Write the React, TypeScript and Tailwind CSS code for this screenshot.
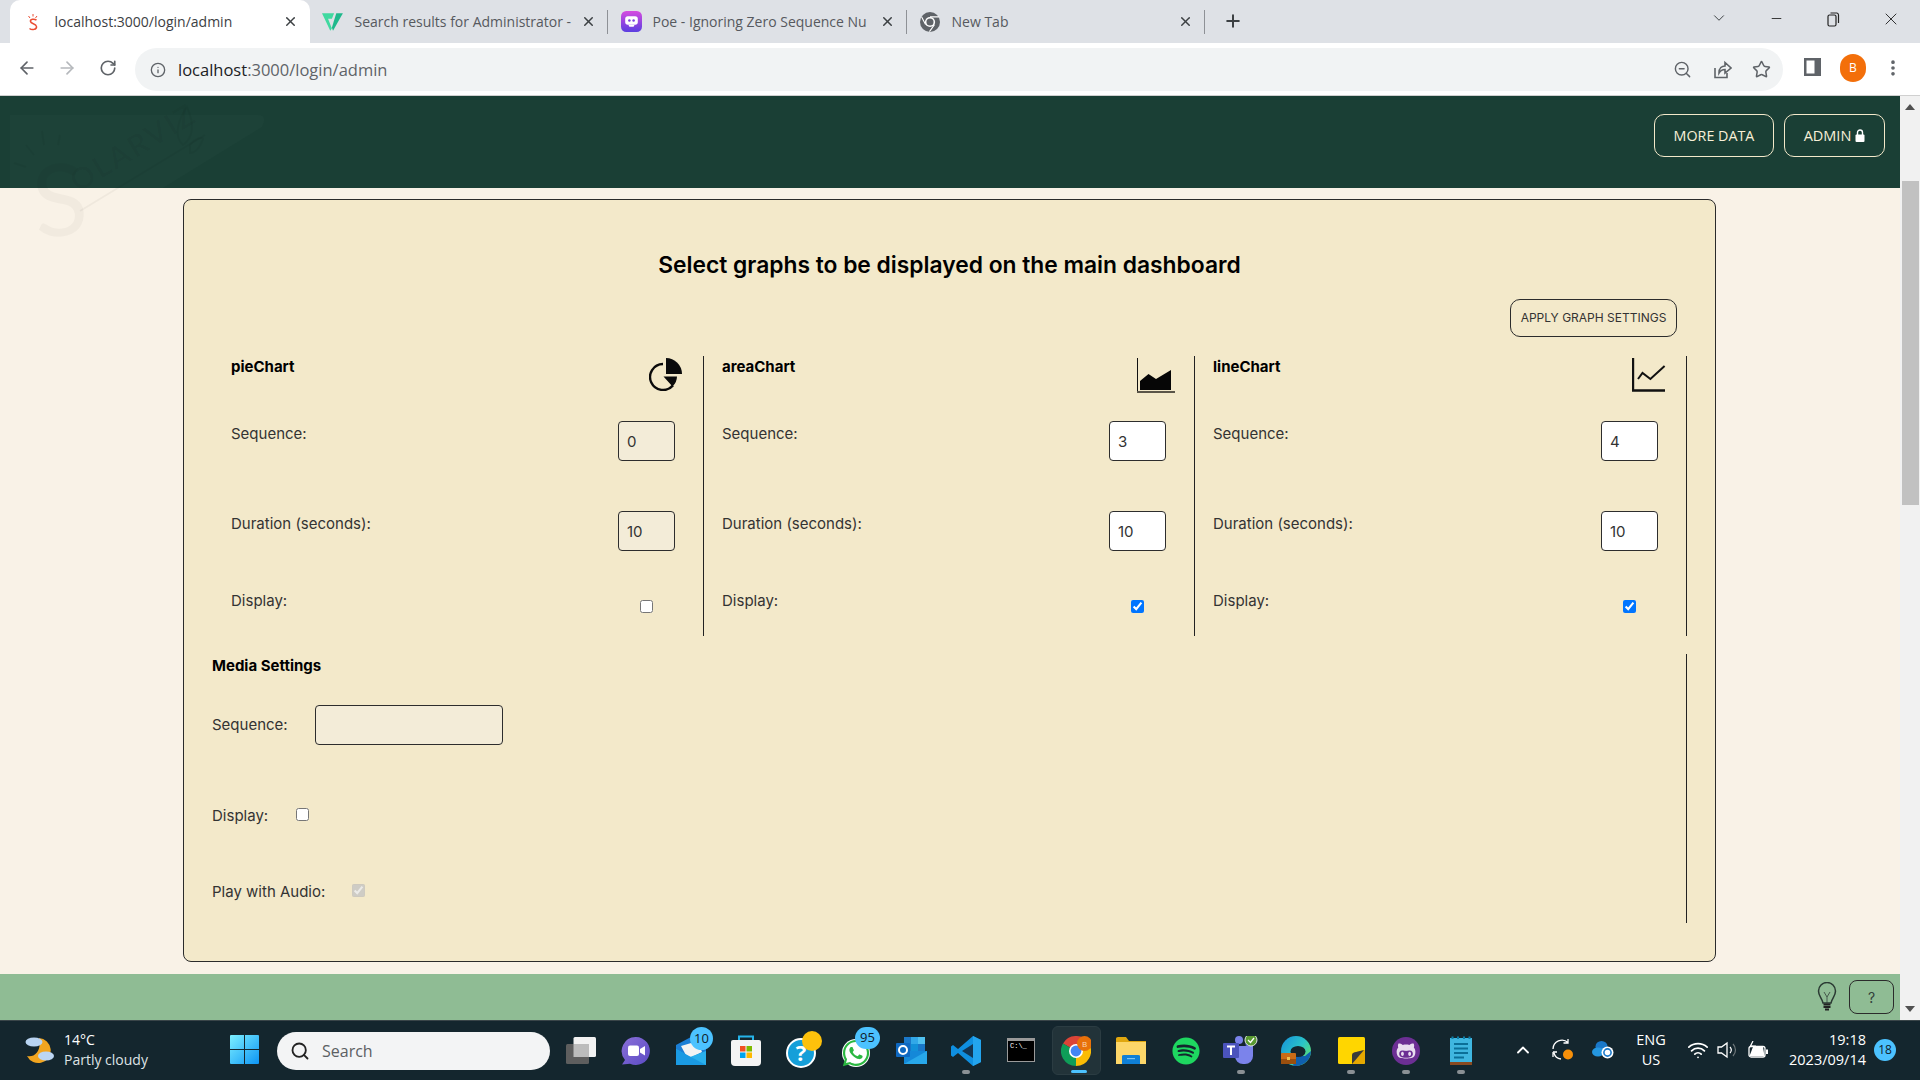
import React from "react";
import { ChevronUp, Search, Wifi, ArrowLeft, ArrowRight, RotateCw, Info, ZoomOut, Star, MoreVertical, X, Plus, Minus, ChevronDown } from "lucide-react";
import { FaWhatsapp, FaSpotify, FaGithubAlt } from "react-icons/fa";

const INTER = "font-['Inter',sans-serif]";

function PieIcon() {
  return (
    <svg width="33" height="33" viewBox="0 0 33 33">
      <path d="M14 6 A13 13 0 1 0 24 27.4" fill="none" stroke="#0b0b0b" strokeWidth="2.4" />
      <path d="M14.5 6 V18.5 H28 A14 14 0 0 1 23.5 28.5 L14.5 18.5 Z" fill="#0b0b0b" />
      <path d="M17 0 A16 16 0 0 1 33 16 L17 16 Z" fill="#0b0b0b" />
    </svg>
  );
}
function AreaIcon() {
  return (
    <svg width="38" height="35" viewBox="0 0 38 35">
      <path d="M0.5 0 V34" stroke="#111" strokeWidth="1" />
      <path d="M3 32 V23 L11.5 16 L19 21 L34 12 V32 Z" fill="#060606" />
      <path d="M0 34 H38" stroke="#5a5548" strokeWidth="2" />
    </svg>
  );
}
function LineIcon() {
  return (
    <svg width="34" height="34" viewBox="0 0 34 34">
      <path d="M1 0 V32.5 H33" fill="none" stroke="#111" strokeWidth="2.4" />
      <path d="M6 21 L10.5 15 L18.4 21 L32.6 8" fill="none" stroke="#111" strokeWidth="2" />
    </svg>
  );
}

function Field({ label, value, disabled }: { label: string; value: string; disabled: boolean }) {
  return (
    <div className="flex justify-between">
      <span className="text-[15px] leading-[24px] mt-px text-[#333]">{label}</span>
      <input
        defaultValue={value}
        disabled={disabled}
        className={`w-[57px] h-[40px] rounded-[4px] border border-[#2d2d2d] pl-[8px] text-[15px] text-[#333] ${disabled ? "bg-[#f3ecd8]" : "bg-white"}`}
      />
    </div>
  );
}

function ChartColumn({ name, icon, iconCls, seq, disabled, checked }: { name: string; icon: React.ReactNode; iconCls: string; seq: string; disabled: boolean; checked: boolean }) {
  return (
    <div className="h-[280px] border-r border-[#222] pl-[18px] pr-[28px]">
      <div className="h-[65px] flex justify-between">
        <span className="text-[15px] leading-[22px] font-bold text-black">{name}</span>
        <span className={`mt-[2px] ${iconCls}`}>{icon}</span>
      </div>
      <div className="h-[90px]"><Field label="Sequence:" value={seq} disabled={disabled} /></div>
      <div className="h-[78px]"><Field label="Duration (seconds):" value="10" disabled={disabled} /></div>
      <div className="flex justify-between">
        <span className="text-[15px] leading-[24px] text-[#333]">Display:</span>
        <span className="w-[57px] flex justify-center pt-[11px]">
          <input type="checkbox" defaultChecked={checked} className="w-[13px] h-[13px]" />
        </span>
      </div>
    </div>
  );
}

function Watermark() {
  return (
    <svg className="absolute left-0 top-[95px] pointer-events-none" width="300" height="190" viewBox="0 0 300 190">
      <path d="M10 20 H258 Q268 20 262 32 L25 178 L10 178 Z" fill="#ffffff" fillOpacity="0.015" />
      <g fill="#000" fillOpacity="0.03" fontFamily="Lato, sans-serif">
        <text x="33" y="142" fontSize="100" transform="rotate(-6 50 110)">S</text>
        <text x="78" y="98" fontSize="30" fontWeight="700" transform="rotate(-31 78 98)" letterSpacing="2">OLARVIZ</text>
      </g>
      <g fill="none" stroke="#000" strokeOpacity="0.04" strokeWidth="2">
        <path d="M80 116 L205 40" />
        <path d="M183 50 C172 40 180 22 187 12 C194 28 194 42 183 50 Z" />
        <path d="M190 50 C196 42 204 42 203 44 C200 52 196 58 190 58 Z" />
        <path d="M60 40 L58 50 M42 36 L44 50 M26 50 L34 60 M14 68 L26 72" />
      </g>
    </svg>
  );
}

function Tab({ width, icon, title, sep = true, active = false }: { width: number; icon: React.ReactNode; title: string; sep?: boolean; active?: boolean }) {
  return (
    <div className={`h-[43px] flex items-center relative shrink-0 ${active ? "bg-white rounded-t-[10px] text-[#3c4043]" : "text-[#56595e]"}`} style={{ width }}>
      <span className="ml-[15px] w-[16px] h-[16px] flex items-center justify-center shrink-0 [&>svg]:max-w-none [&>svg]:shrink-0">{icon}</span>
      <span className="ml-[13.5px] text-[14px] whitespace-nowrap">{title}</span>
      <X size={15} strokeWidth={2.4} className="absolute right-[12px] top-[14px] text-[#3c4043]" />
      {sep && <span className="absolute right-0 top-[10px] h-[24px] w-px bg-[#8e9196]" />}
    </div>
  );
}

function BrowserChrome() {
  return (
    <div className="font-['Open_Sans',sans-serif] shrink-0">
      <div className="h-[43px] bg-[#dee1e6] flex pl-[10px] relative">
        <Tab active width={300} title="localhost:3000/login/admin" sep={false} icon={
          <svg width="14" height="20" viewBox="0 0 14 20"><path d="M10.5 8 C8 6.5 4 7 4.5 9.5 C5 12 10 11.5 10.5 14.5 C11 17.5 6 18.5 3.5 16.5" fill="none" stroke="#ea4d33" strokeWidth="1.5" /><path d="M7 2 V4.5 M2.5 4 L4 6 M11 4 L9.5 6" stroke="#ea4d33" strokeWidth="1" /></svg>
        } />
        <Tab width={298} title="Search results for Administrator -" icon={
          <svg width="22" height="20" viewBox="0 0 20 18"><path d="M0 1 H11 L9 6 H5.5 L9 15 L7.5 17 Z" fill="#40d9a0" /><path d="M13 1 H19 L10 17 L9 14 Z" fill="#1fb98c" /></svg>
        } />
        <Tab width={299} title="Poe - Ignoring Zero Sequence Nu" icon={
          <svg width="21" height="21" viewBox="0 0 20 20"><defs><linearGradient id="poe" x1="0" y1="0" x2="0" y2="1"><stop offset="0" stopColor="#d64be0" /><stop offset="1" stopColor="#5b3fe0" /></linearGradient></defs><rect width="20" height="20" rx="5" fill="url(#poe)" /><rect x="4" y="5" width="12" height="8" rx="2.5" fill="#fff" /><circle cx="8" cy="9" r="1.2" fill="#7b3fe0" /><circle cx="12" cy="9" r="1.2" fill="#7b3fe0" /><path d="M7 13 H13 L12 15 H8 Z" fill="#fff" /></svg>
        } />
        <Tab width={298} title="New Tab" icon={
          <svg width="20" height="20" viewBox="0 0 18 18"><circle cx="9" cy="9" r="9" fill="#5f6368" /><circle cx="9" cy="9" r="4.6" fill="#fff" /><circle cx="9" cy="9" r="3.2" fill="#5f6368" /><path d="M9 4.4 H17 M5 11.3 L1.5 4.5 M13 11.3 L8.5 17.6" stroke="#fff" strokeWidth="1" /></svg>
        } />
        <Plus size={20} strokeWidth={2.4} className="text-[#3c4043] ml-[18px] mt-[11px]" />
        <ChevronDown size={18} strokeWidth={1.3} className="absolute left-[1710px] top-[9px] text-[#3c4043]" />
        <Minus size={15} strokeWidth={1.4} className="absolute left-[1769px] top-[11px] text-[#222]" />
        <svg className="absolute left-[1827px] top-[12px]" width="13" height="15" viewBox="0 0 13 15"><rect x="1" y="3" width="8" height="11" rx="1.5" fill="none" stroke="#222" strokeWidth="1.2" /><path d="M3.5 1 H10 A2 2 0 0 1 11.5 3 V11" fill="none" stroke="#222" strokeWidth="1.2" /></svg>
        <X size={20} strokeWidth={1.1} className="absolute left-[1881px] top-[9px] text-[#222]" />
      </div>
      <div className="h-[53px] bg-white flex items-start border-b border-[#d0d0d0] relative">
        <ArrowLeft size={20} strokeWidth={2} className="absolute left-[17px] top-[15px] text-[#5f6368]" />
        <ArrowRight size={20} strokeWidth={2} className="absolute left-[57px] top-[15px] text-[#b5b8bc]" />
        <RotateCw size={18} strokeWidth={2.2} className="absolute left-[99px] top-[16px] text-[#5f6368]" />
        <div className="ml-[135px] mt-[5px] w-[1648px] h-[43px] rounded-full bg-[#f1f3f4] flex items-center pl-[15px] relative">
          <Info size={16} strokeWidth={2} className="text-[#5f6368]" />
          <span className="ml-[12px] pt-px text-[16.5px] text-[#5f6368]"><span className="text-[#202124]">localhost</span>:3000/login/admin</span>
          <ZoomOut size={19} strokeWidth={1.8} className="absolute left-[1538px] top-[12px] text-[#5f6368]" />
          <svg className="absolute left-[1578px] top-[12px]" width="19" height="19" viewBox="0 0 19 19"><path d="M2 8 V17.5 H14 V13" fill="none" stroke="#5f6368" strokeWidth="1.6" /><path d="M6 13 C6 8 9 6 12 6 V2.5 L18 8 L12 13 V9.5 C9.5 9.5 7.5 10.5 6 13 Z" fill="none" stroke="#5f6368" strokeWidth="1.6" /></svg>
          <Star size={19} strokeWidth={1.9} className="absolute left-[1617px] top-[12px] text-[#5f6368]" />
        </div>
        <svg className="absolute left-[1804px] top-[15px]" width="17" height="18" viewBox="0 0 17 18"><rect x="0" y="0" width="17" height="18" fill="#5f6368" /><rect x="2.5" y="2.5" width="8" height="13" fill="#fff" /></svg>
        <span className="absolute left-[1840px] top-[11px] w-[26px] h-[28px] rounded-full bg-[#f36f0a] text-white text-[12px] flex items-center justify-center">B</span>
        <MoreVertical size={20} strokeWidth={2.4} className="absolute left-[1883px] top-[15px] text-[#5f6368]" />
      </div>
    </div>
  );
}

function Badge({ n, cls }: { n: string; cls: string }) {
  return <span className={`absolute rounded-full bg-[#4cc2ff] text-[#10202a] text-[13px] leading-none flex items-center justify-center ${cls}`}>{n}</span>;
}

function TaskItem({ children, dot, cls = "" }: { children: React.ReactNode; dot?: boolean; cls?: string }) {
  return (
    <div className={`w-[55px] h-[59px] shrink-0 relative flex items-center justify-center ${cls}`}>
      {children}
      {dot && <span className="absolute left-[23.5px] bottom-[6px] w-[8px] h-[4px] rounded-full bg-[#8a9094]" />}
    </div>
  );
}

function ChromeIcon() {
  return (
    <svg width="30" height="30" viewBox="0 0 30 30">
      <path d="M15 15 L2 7.5 A15 15 0 0 1 28 7.5 Z" fill="#db4437" />
      <path d="M15 15 L2 7.5 A15 15 0 0 0 15 30 Z" fill="#0f9d58" />
      <path d="M15 15 L28 7.5 A15 15 0 0 1 15 30 Z" fill="#fbbc05" />
      <circle cx="15" cy="15" r="7" fill="#fff" />
      <circle cx="15" cy="15" r="5.4" fill="#4285f4" />
      <circle cx="23.5" cy="7.5" r="7.5" fill="#e8710a" />
      <text x="23.5" y="10.5" fontSize="8" fill="#fbd9b8" textAnchor="middle" fontFamily="Open Sans">B</text>
    </svg>
  );
}

function Taskbar() {
  return (
    <div className="h-[60px] shrink-0 bg-[#14262e] border-t border-[#3a4549] flex items-center text-white font-['Open_Sans',sans-serif]">
      <div className="w-[218px] shrink-0 flex items-center pl-[25px] pb-[2px]">
        <svg width="29" height="28" viewBox="0 0 29 28">
          <path d="M14 2 A12.5 12.5 0 1 1 2 20 C10 22 17 14 14 2 Z" fill="#f2a51f" />
          <ellipse cx="9" cy="6" rx="8.5" ry="4.5" fill="#b9d4f2" />
          <ellipse cx="21" cy="20" rx="8" ry="4.5" fill="#bcd6f4" />
        </svg>
        <div className="ml-[10px] text-[14px] leading-[20px]">
          <div>14°C</div>
          <div className="text-[#dfe3e5]">Partly cloudy</div>
        </div>
      </div>
      <div className="w-[59px] shrink-0 flex pl-[12px] pb-[2px]">
        <svg width="29" height="29" viewBox="0 0 29 29">
          <defs><linearGradient id="win" x1="0" y1="0" x2="1" y2="1"><stop offset="0" stopColor="#7df0ff" /><stop offset="1" stopColor="#0d95f5" /></linearGradient></defs>
          <path d="M1 0 H14 V14 H0 V1 Q0 0 1 0 Z M15 0 H28 Q29 0 29 1 V14 H15 Z M0 15 H14 V29 H1 Q0 29 0 28 Z M15 15 H29 V28 Q29 29 28 29 H15 Z" fill="url(#win)" />
        </svg>
      </div>
      <div className="w-[273px] h-[38px] shrink-0 rounded-full bg-[#f3f4f5] flex items-center pl-[13px] text-[#5c6063]">
        <Search size={20} strokeWidth={2.2} className="text-[#222]" />
        <span className="ml-[12px] text-[16px]">Search</span>
      </div>
      <div className="w-[3.5px] shrink-0" />
      <TaskItem>
        <svg width="30" height="28" viewBox="0 0 30 28"><rect x="7.5" y="0" width="22.5" height="20" rx="1.5" fill="#f2f2f2" /><rect x="0" y="7" width="23" height="20" rx="1.5" fill="#5e5e5e" /><rect x="7.5" y="7" width="15.5" height="13" fill="#bcbcbc" /></svg>
      </TaskItem>
      <TaskItem>
        <svg width="30" height="30" viewBox="0 0 30 30"><defs><linearGradient id="meet" x1="0" y1="0" x2="1" y2="1"><stop offset="0" stopColor="#8a6fd8" /><stop offset="1" stopColor="#5b4bc4" /></linearGradient></defs><path d="M15 1 A14 14 0 1 1 9 27.7 L1 28.5 L4 24 A14 14 0 0 1 15 1 Z" fill="url(#meet)" /><rect x="7" y="9.5" width="11" height="10.5" rx="2" fill="#fff" /><path d="M19 13 L24 10 V19.5 L19 16.5 Z" fill="#fff" /></svg>
      </TaskItem>
      <TaskItem>
        <div className="relative w-[30px] h-[30px] mt-[3px]">
          <svg width="30" height="28" viewBox="0 0 30 28"><path d="M0 8 L15 0 L30 10 V27 H0 Z" fill="#1b7fd6" /><path d="M5 9 L22 4 L26 15 L12 22 Z" fill="#f3f3f3" /><path d="M0 12 L14 20 L30 14 V28 H0 Z" fill="#2ab0ec" /><path d="M0 12 L30 28 H0 Z" fill="#1a9ae3" /></svg>
          <Badge n="10" cls="left-[14px] -top-[10px] w-[23px] h-[23px]" />
        </div>
      </TaskItem>
      <TaskItem>
        <svg width="30" height="32" viewBox="0 0 30 32"><path d="M8 6 V1.5 H22 V6" fill="none" stroke="#25b4ea" strokeWidth="2" /><path d="M0 7 Q0 5 2 5 H28 Q30 5 30 7 V27 Q30 31 26 31 H4 Q0 31 0 27 Z" fill="#f4f4f4" /><rect x="9" y="11" width="5.5" height="5.5" fill="#f25022" /><rect x="15.5" y="11" width="5.5" height="5.5" fill="#7fba00" /><rect x="9" y="17.5" width="5.5" height="5.5" fill="#00a4ef" /><rect x="15.5" y="17.5" width="5.5" height="5.5" fill="#ffb900" /></svg>
      </TaskItem>
      <TaskItem>
        <div className="relative w-[30px] h-[30px] mt-[4px]">
          <svg width="30" height="30" viewBox="0 0 30 30"><circle cx="15" cy="15" r="14" fill="#159fd9" stroke="#fff" strokeWidth="2" /><text x="15" y="23" fontSize="22" fontWeight="700" fill="#fff" textAnchor="middle" fontFamily="Open Sans">?</text></svg>
          <span className="absolute left-[16px] -top-[7px] w-[20px] h-[20px] rounded-full bg-[#fdc10c]" />
        </div>
      </TaskItem>
      <TaskItem>
        <div className="relative w-[30px] h-[30px] mt-[4px]">
          <svg className="absolute left-0 top-0" width="30" height="30" viewBox="0 0 30 30"><circle cx="15" cy="15" r="14" fill="#fff" /></svg>
          <FaWhatsapp size={30} className="absolute left-0 top-0 text-[#2bb741]" />
          <Badge n="95" cls="left-[14px] -top-[11px] w-[25px] h-[22px]" />
        </div>
      </TaskItem>
      <TaskItem>
        <svg width="31" height="27" viewBox="0 0 31 27"><rect x="8" y="0" width="21" height="14" fill="#1a78c9" /><rect x="15" y="0" width="7" height="7" fill="#32a8e8" /><rect x="22" y="0" width="7" height="7" fill="#50c2f0" /><rect x="15" y="7" width="7" height="7" fill="#1290d8" /><path d="M8 14 H31 V27 H8 Z" fill="#1488d8" /><path d="M8 27 L31 14 V27 Z" fill="#28a8ea" /><rect x="0" y="6" width="14" height="14" rx="1" fill="#0f68c0" /><circle cx="7" cy="13" r="4" fill="none" stroke="#fff" strokeWidth="2" /></svg>
      </TaskItem>
      <TaskItem dot>
        <svg width="30" height="30" viewBox="0 0 30 30"><path d="M22 0 L30 4 V26 L22 30 L7 17 L2 21 L0 19.5 V10.5 L2 9 L7 13 Z" fill="#0f8fe0" /><path d="M22 8 L11 15 L22 22 Z" fill="#14263a" fillOpacity="0.85" /><path d="M22 0 L30 4 V26 L22 30 Z" fill="#23a4ee" /></svg>
      </TaskItem>
      <TaskItem>
        <div className="w-[28px] h-[24px] mb-[2px] bg-black border border-[#9a9a9a] border-t-[3px] font-['Liberation_Mono',monospace] text-[7px] leading-[10px] text-white pl-[2px]">C:\_</div>
      </TaskItem>
      <TaskItem>
        <div className="w-[49px] h-[49px] rounded-[6px] bg-[#223339] border border-[#2b3c42] flex items-center justify-center relative">
          <ChromeIcon />
          <span className="absolute left-[18px] bottom-[1px] w-[16px] h-[3px] rounded-full bg-[#4cc2ff]" />
        </div>
      </TaskItem>
      <TaskItem>
        <svg width="30" height="27" viewBox="0 0 30 27"><path d="M0 1.5 Q0 0 2 0 H10 L13 4 H30 V27 H0 Z" fill="#e0a70f" /><rect x="0" y="5" width="30" height="22" fill="#fcd669" /><path d="M6 19 Q6 18 8 18 H22 Q24 18 24 19 V27 H6 Z" fill="#0f7fd6" /><rect x="11" y="21" width="8" height="1.2" fill="#7ec4f0" /></svg>
      </TaskItem>
      <TaskItem>
        <FaSpotify size={28} className="text-[#1ed760]" />
      </TaskItem>
      <TaskItem dot>
        <svg width="36" height="30" viewBox="0 0 36 30"><circle cx="16" cy="4" r="4" fill="#7b83eb" /><circle cx="26" cy="8" r="3.5" fill="#5059c9" /><path d="M12 10 H30 V20 A8 8 0 0 1 22 28 H20 A8 8 0 0 1 12 20 Z" fill="#7b83eb" /><rect x="0" y="7" width="16" height="15" rx="1" fill="#4b53bc" /><path d="M4 10.5 H12 M8 10.5 V19" stroke="#fff" strokeWidth="2" /><circle cx="28" cy="4" r="6" fill="#5a9a32" stroke="#e0e6e0" strokeWidth="1" /><path d="M25 4 L27.5 6.5 L31 2" fill="none" stroke="#fff" strokeWidth="1.3" /></svg>
      </TaskItem>
      <TaskItem>
        <svg width="30" height="30" viewBox="0 0 30 30"><defs><linearGradient id="edge" x1="0" y1="0" x2="1" y2="0.7"><stop offset="0" stopColor="#1590dc" /><stop offset="0.6" stopColor="#2ac4c8" /><stop offset="1" stopColor="#5fe06e" /></linearGradient></defs><circle cx="15" cy="15" r="15" fill="url(#edge)" /><path d="M30 15 A15 15 0 0 1 12 29.7 L14 20 L24 20 Z" fill="#0f5fae" /><ellipse cx="17" cy="15.5" rx="7.5" ry="5.5" fill="#14262e" /><rect x="0" y="17" width="15" height="11" rx="1" fill="#c96b16" /><rect x="0" y="23" width="15" height="5" fill="#9a4f0e" /><rect x="6" y="21" width="3" height="3" fill="#f2c14e" /></svg>
      </TaskItem>
      <TaskItem dot>
        <svg width="27" height="27" viewBox="0 0 27 27"><rect width="27" height="27" rx="1.5" fill="#ffd600" /><path d="M14 27 V18 Q14 16 16 15.5 L27 13 V25 Q27 27 25 27 Z" fill="#e6a800" /><path d="M14 27 V18 Q14 16 16 15.5 L26 13 L14 27 Z" fill="#3a3a3a" /></svg>
      </TaskItem>
      <TaskItem dot>
        <div className="w-[28px] h-[28px] rounded-full bg-[#6c2f94] flex items-center justify-center">
          <FaGithubAlt size={20} className="text-[#e9def0]" />
        </div>
      </TaskItem>
      <TaskItem dot>
        <svg width="22" height="29" viewBox="0 0 22 29"><rect x="0" y="2" width="22" height="24" fill="#3fb6e0" /><rect x="0" y="26" width="22" height="3" fill="#8a4a20" /><path d="M2.5 0.5 V3 M8 0.5 V3 M14 0.5 V3 M19.5 0.5 V3" stroke="#0f7fa8" strokeWidth="2" /><path d="M4 8 H18 M4 12.5 H18 M4 17 H18 M4 21.5 H14" stroke="#0b6f98" strokeWidth="2" /></svg>
      </TaskItem>
      <div className="w-[14.5px] shrink-0" />
      <div className="w-[40px] flex justify-center shrink-0 mb-[2px]"><ChevronUp size={20} strokeWidth={2.2} /></div>
      <div className="w-[40px] flex justify-center shrink-0 mb-[2px]">
        <svg width="22" height="22" viewBox="0 0 22 22"><path d="M1 10 A9 9 0 0 1 16 3.5 M16 0 V4 H11.5" fill="none" stroke="#fff" strokeWidth="1.3" /><path d="M1 18 V13 M1 13 H5 M2 14 A8 8 0 0 0 9 20" fill="none" stroke="#fff" strokeWidth="1.3" /><circle cx="16" cy="15.5" r="5" fill="#f7900a" /></svg>
      </div>
      <div className="w-[40px] flex justify-center shrink-0 mb-[2px]">
        <svg width="22" height="18" viewBox="0 0 22 18"><ellipse cx="9.5" cy="5.5" rx="6" ry="5.5" fill="#1a78c9" /><ellipse cx="6" cy="11" rx="6" ry="4.5" fill="#2496e0" /><circle cx="15.5" cy="11.5" r="6" fill="#fff" /><circle cx="15.5" cy="11.5" r="3.6" fill="none" stroke="#1a78c9" strokeWidth="1.6" /></svg>
      </div>
      <div className="w-[56px] shrink-0 text-center text-[14.5px] leading-[20px] mb-[2px]"><div>ENG</div><div>US</div></div>
      <div className="w-[5px] shrink-0" />
      <div className="w-[28px] flex justify-center shrink-0 mb-[2px]"><Wifi size={22} strokeWidth={1.9} /></div>
      <div className="w-[30px] flex justify-center shrink-0 mb-[2px]">
        <svg width="21" height="18" viewBox="0 0 21 18"><path d="M1 6 H4.5 L10 2 V16 L4.5 12 H1 Z" fill="none" stroke="#fff" strokeWidth="1.3" /><path d="M13 6 A4.5 4.5 0 0 1 13 12" fill="none" stroke="#fff" strokeWidth="1.2" /><path d="M16 3 A8.5 8.5 0 0 1 16 15" fill="none" stroke="#6d7679" strokeWidth="1.2" /></svg>
      </div>
      <div className="w-[32px] flex justify-center shrink-0 mb-[2px]">
        <svg width="21" height="18" viewBox="0 0 21 18"><rect x="1" y="5.5" width="16" height="10.5" rx="2" fill="none" stroke="#fff" strokeWidth="1.3" /><path d="M1.5 15 L5 6 H15 L16.5 15 Z" fill="#fff" /><path d="M19 8.5 V13" stroke="#fff" strokeWidth="2" /><path d="M5 0 L2.5 5 H7 L4.5 9" fill="none" stroke="#fff" strokeWidth="1.2" /></svg>
      </div>
      <div className="w-[92px] shrink-0 text-right text-[14.5px] leading-[20px] mb-[2px]"><div>19:18</div><div>2023/09/14</div></div>
      <span className="ml-[8px] w-[22px] h-[22px] rounded-full bg-[#4cc2ff] text-[#10202a] text-[12px] flex items-center justify-center shrink-0 mb-[2px]">18</span>
    </div>
  );
}

export default function App() {
  return (
    <div className="w-[1920px] h-[1080px] flex flex-col overflow-hidden">
      <BrowserChrome />
      <div className="flex flex-1 min-h-0 relative">
        <div className={`w-[1900px] flex flex-col ${INTER}`}>
          <header className="h-[92px] shrink-0 bg-[#1a3f35] flex justify-end items-start pt-[18px] pr-[15px] gap-[10px] font-['Open_Sans',sans-serif]">
            <button className="w-[120px] h-[43px] rounded-[10px] border border-[#f3e9ca] text-[#f8f0d8] text-[14.3px]">MORE DATA</button>
            <button className="w-[101px] h-[43px] rounded-[10px] border border-[#f3e9ca] text-[#f8f0d8] text-[14.5px] flex items-center justify-center gap-[4px]">
              ADMIN
              <svg width="10" height="13" viewBox="0 0 10 13"><path d="M2.5 6 V3.5 A2.5 2.5 0 0 1 7.5 3.5 V6" fill="none" stroke="#fff" strokeWidth="1.4" /><rect x="0.5" y="5.5" width="9" height="7.5" rx="1" fill="#fff" /></svg>
            </button>
          </header>
          <main className="flex-1 min-h-0 bg-[#f9f2e7] pl-[183px] pt-[11px]">
            <div className="relative w-[1533px] h-[763px] bg-[#f3e9ca] border border-[#2b2b2b] rounded-[8px] pl-[28px] pr-[28px]">
              <h1 className="pt-[49px] h-[99px] text-center text-[22.8px] leading-[32px] font-semibold text-black">Select graphs to be displayed on the main dashboard</h1>
              <div className="h-[57px] flex justify-end items-start -mr-[-10px]">
                <button className="w-[167px] h-[38px] rounded-[10px] border border-[#2b2b2b] text-[12px] text-[#333]">APPLY GRAPH SETTINGS</button>
              </div>
              <div className="grid grid-cols-[491px_491px_492px] ml-[1px]">
                <ChartColumn name="pieChart" icon={<PieIcon />} iconCls="-mr-[7px]" seq="0" disabled checked={false} />
                <ChartColumn name="areaChart" icon={<AreaIcon />} iconCls="-mr-[9px]" seq="3" disabled={false} checked />
                <ChartColumn name="lineChart" icon={<LineIcon />} iconCls="-mr-[8px]" seq="4" disabled={false} checked />
              </div>
              <div className="mt-[19px] h-[269px] border-r border-[#222]">
                <div className="-mt-[1px] text-[15px] leading-[24px] font-bold text-black">Media Settings</div>
                <div className="mt-[27px] flex items-center text-[#333] text-[15px]">
                  <span className="w-[103px]">Sequence:</span>
                  <input disabled className="w-[188px] h-[40px] rounded-[4px] border border-[#2d2d2d] bg-[#f3ecd8]" />
                </div>
                <div className="mt-[59px] flex items-center text-[#333] text-[15px] leading-[24px]">
                  <span>Display:</span>
                  <input type="checkbox" className="w-[13px] h-[13px] ml-[28px] -mt-[3px]" />
                </div>
                <div className="mt-[52px] flex items-center text-[#333] text-[15px] leading-[24px]">
                  <span>Play with Audio:</span>
                  <input type="checkbox" defaultChecked disabled className="w-[13px] h-[13px] ml-[27px] -mt-[3px]" />
                </div>
              </div>
            </div>
          </main>
          <footer className="h-[46px] shrink-0 bg-[#8fbc94] flex justify-end items-center pr-[6px]">
            <svg className="mr-[12px]" width="20" height="30" viewBox="0 0 20 30"><path d="M6 21 C5 16 1.5 14 1.5 9 A8.5 8.5 0 0 1 18.5 9 C18.5 14 15 16 14 21 Z" fill="none" stroke="#2b3a33" strokeWidth="1.5" /><path d="M7 10 L10 15 L13 10 M10 15 V21" fill="none" stroke="#33413a" strokeWidth="0.8" /><path d="M6.5 22.5 H13.5 M6.5 25 H13.5 M8 27.5 H12" stroke="#222" strokeWidth="2" /></svg>
            <button className="w-[45px] h-[34px] rounded-[8px] border border-[#2b2b2b] text-[#33413a] text-[14px]">?</button>
          </footer>
        </div>
        <div className="w-[20px] bg-[#f1f1f1] flex flex-col items-center justify-between shrink-0">
          <div className="w-full flex flex-col items-center">
            <span className="mt-[8px] w-0 h-0 border-l-[5px] border-r-[5px] border-b-[6px] border-l-transparent border-r-transparent border-b-[#505050]" />
            <span className="mt-[71px] w-[17px] h-[324px] bg-[#c1c1c1]" />
          </div>
          <span className="mb-[8px] w-0 h-0 border-l-[5px] border-r-[5px] border-t-[6px] border-l-transparent border-r-transparent border-t-[#505050]" />
        </div>
      </div>
      <Taskbar />
      <Watermark />
    </div>
  );
}
